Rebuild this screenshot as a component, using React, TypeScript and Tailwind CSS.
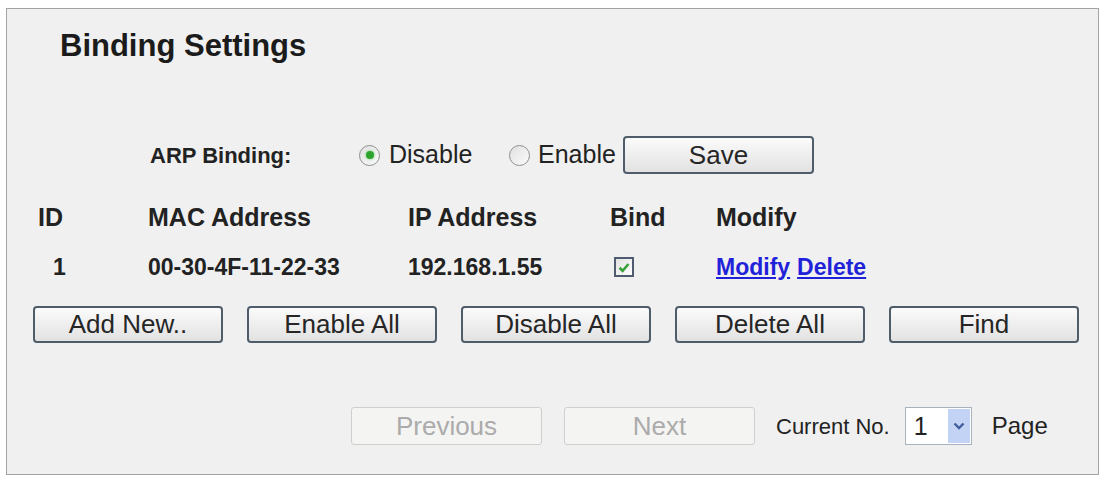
import { useState } from 'react';

type Binding = {
  id: number;
  mac: string;
  ip: string;
  bound: boolean;
};

const bindings: Binding[] = [{ id: 1, mac: '00-30-4F-11-22-33', ip: '192.168.1.55', bound: true }];

const actions = ['Add New..', 'Enable All', 'Disable All', 'Delete All', 'Find'];

const Radio = ({ checked, onClick }: { checked: boolean; onClick: () => void }) => (
  <button
    type="button"
    onClick={onClick}
    className="flex h-[21px] w-[21px] shrink-0 items-center justify-center rounded-full border border-[#8e8f8f] bg-gradient-to-br from-[#e0e0e0] to-[#fbfbfb]"
  >
    {checked && <span className="h-[8px] w-[8px] rounded-full bg-[#2ea32e] shadow-[0_0_3px_#6fd46f]" />}
  </button>
);

const Checkbox = ({ checked }: { checked: boolean }) => (
  <span className="flex h-[20px] w-[20px] items-center justify-center border-2 border-[#505a70] bg-gradient-to-br from-[#e2e2e2] to-white">
    {checked && (
      <svg width="12" height="11" viewBox="0 0 12 11">
        <path d="M1.5 5.8 L4.6 8.8 L10.5 2" fill="none" stroke="#3aa13a" strokeWidth="2.6" />
      </svg>
    )}
  </span>
);

const Btn = ({ label, className = '' }: { label: string; className?: string }) => (
  <button
    type="button"
    className={`flex items-center justify-center rounded-[4px] border-2 border-[#4f5d6b] bg-gradient-to-b from-[#fbfbfb] to-[#e2e2e2] text-[26px] text-[#262626] ${className}`}
  >
    {label}
  </button>
);

const DisabledBtn = ({ label }: { label: string }) => (
  <button
    type="button"
    disabled
    className="flex h-[38px] w-[191px] items-center justify-center rounded-[3px] border border-[#cfcfcf] bg-[#f4f4f2] text-[26px] text-[#ababab]"
  >
    {label}
  </button>
);

export default function App() {
  const [arp, setArp] = useState<'disable' | 'enable'>('disable');

  return (
    <div className="h-[479px] w-[1100px] bg-white pl-[6px] pr-[1px] pt-[8px] font-['Liberation_Sans',Arial,sans-serif] text-[#222]">
      <div className="flex h-[467px] flex-col border border-[#a3a3a3] bg-[#f0f0f0]">
        <h1 className="pl-[53px] pt-[19px] text-[31px] font-bold leading-[36px] text-[#1b1b1b]">Binding Settings</h1>

        {/* ARP binding switch */}
        <div className="mt-[72px] flex h-[38px] items-center pl-[143px]">
          <span className="w-[209px] text-[22px] font-bold">ARP Binding:</span>
          <Radio checked={arp === 'disable'} onClick={() => setArp('disable')} />
          <span className="w-[129px] pl-[9px] text-[25px]">Disable</span>
          <Radio checked={arp === 'enable'} onClick={() => setArp('enable')} />
          <span className="w-[93px] pl-[8px] text-[25px]">Enable</span>
          <Btn label="Save" className="h-[38px] w-[191px]" />
        </div>

        {/* binding table */}
        <div className="mt-[25px] grid grid-cols-[110px_260px_202px_106px_1fr] pl-[31px]">
          <div className="h-[36px] text-[25px] font-bold leading-[36px]">ID</div>
          <div className="h-[36px] text-[25px] font-bold leading-[36px]">MAC Address</div>
          <div className="h-[36px] text-[25px] font-bold leading-[36px]">IP Address</div>
          <div className="h-[36px] text-[25px] font-bold leading-[36px]">Bind</div>
          <div className="h-[36px] text-[25px] font-bold leading-[36px]">Modify</div>
          {bindings.map((b) => (
            <div key={b.id} className="contents">
              <div className="mt-[14px] pl-[15px] text-[23px] font-bold leading-[36px]">{b.id}</div>
              <div className="mt-[14px] text-[23px] font-bold leading-[36px]">{b.mac}</div>
              <div className="mt-[14px] text-[23px] font-bold leading-[36px]">{b.ip}</div>
              <div className="mt-[14px] flex items-center pl-[4px]">
                <Checkbox checked={b.bound} />
              </div>
              <div className="mt-[14px] flex gap-[7px] text-[23px] font-bold leading-[36px] text-[#1f22d8]">
                <a href="#" className="underline">Modify</a>
                <a href="#" className="underline">Delete</a>
              </div>
            </div>
          ))}
        </div>

        {/* bulk actions */}
        <div className="mt-[21px] flex gap-[24px] pl-[26px]">
          {actions.map((a) => (
            <Btn key={a} label={a} className="h-[37px] w-[190px]" />
          ))}
        </div>

        {/* paging */}
        <div className="mt-[64px] flex items-center pl-[344px]">
          <DisabledBtn label="Previous" />
          <span className="ml-[22px]">
            <DisabledBtn label="Next" />
          </span>
          <span className="ml-[21px] text-[22px]">Current No.</span>
          <div className="ml-[15px] flex h-[38px] w-[67px] items-stretch border border-[#a9b3bf] bg-white">
            <span className="flex-1 pl-[8px] text-[25px] leading-[36px]">1</span>
            <span className="my-[1px] mr-[1px] flex w-[22px] items-center justify-center bg-[#c3d3f6]">
              <svg width="12" height="8" viewBox="0 0 12 8">
                <path d="M1.5 1.5 L6 6 L10.5 1.5" fill="none" stroke="#3f5e9b" strokeWidth="2.4" />
              </svg>
            </span>
          </div>
          <span className="ml-[20px] text-[24px]">Page</span>
        </div>
      </div>
    </div>
  );
}
